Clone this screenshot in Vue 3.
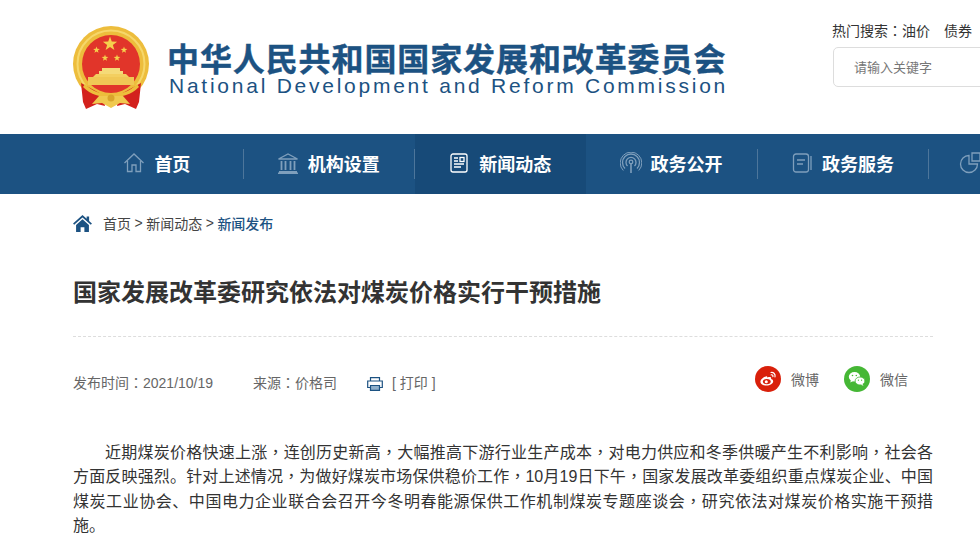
<template>
  <div class="page">
    <header class="top">
      <svg class="emblem" viewBox="0 0 80 84" width="80" height="84">
        <circle cx="39" cy="38" r="38" fill="#edbd3c" />
        <circle cx="39" cy="38" r="33.500" fill="none" stroke="#f6d76a" stroke-width="2" />
        <circle cx="39" cy="38" r="29" fill="#e1352a" />
        <polygon v-for="(s, i) in stars" :key="i" :points="starPoints(s)" fill="#f5d04c" />
        <path d="M24 48h30l3 3H21z" fill="#f3cf60" />
        <path d="M27 45h24v3H27zM30 42h18v3H30z" fill="#f5da78" />
        <path d="M16 51h46v8H16z" fill="#f0c755" />
        <path d="M9 57 31 69l2 11-8-2-11 5-3-7z" fill="#d3211d" />
        <path d="M69 57 47 69l-2 11 8-2 11 5 3-7z" fill="#d3211d" />
        <path d="M13 58c8 8 16 10 26 10s18-2 26-10l2 3c-8 8-17 10-28 10S19 69 11 61z" fill="#edbd3c" />
        <path d="M27 70h24l7 8-10-1-9 5-9-5-10 1z" fill="#f0c94f" />
        <circle cx="39" cy="72" r="3.500" fill="#d9a52c" />
      </svg>
      <div class="brand">
        <h1 class="cn-name">中华人民共和国国家发展和改革委员会</h1>
        <p class="en-name">National Development and Reform Commission</p>
      </div>
      <div class="search-side">
        <div class="hot">
          <span><template v-for="(seg, i) in punct('热门搜索：油价')" :key="i"><span :class="{ mark: seg.mark }">{{ seg.text }}</span></template></span>
          <span>债券</span>
        </div>
        <input class="search" type="text" placeholder="请输入关键字" />
      </div>
    </header>

    <nav class="nav">
      <a v-for="item in navItems" :key="item.label" class="nav-item" :class="{ active: item.active }">
        <svg class="nav-icon" viewBox="0 0 22 22" width="22" height="22" fill="none" stroke="currentColor" stroke-width="1.300" v-html="item.icon"></svg>
        <span class="nav-label">{{ item.label }}</span>
      </a>
    </nav>

    <main class="content">
      <div class="crumbs">
        <svg viewBox="0 0 20 18" width="19" height="17">
          <path d="M10 0 0 9l1.200 1.400L10 2.600l8.800 7.800L20 9l-3-2.700V1.500h-2.600v2.500z" fill="#1c5282" />
          <path d="M3.200 10.600 10 4.600l6.800 6V18H12v-5H8v5H3.200z" fill="#1c5282" />
        </svg>
        <span>首页</span><i>&gt;</i><span>新闻动态</span><i>&gt;</i><b>新闻发布</b>
      </div>

      <h2 class="title">国家发展改革委研究依法对煤炭价格实行干预措施</h2>

      <div class="meta">
        <span class="date"><template v-for="(seg, i) in punct('发布时间：2021/10/19')" :key="i"><span :class="{ mark: seg.mark }">{{ seg.text }}</span></template></span>
        <span class="source"><template v-for="(seg, i) in punct('来源：价格司')" :key="i"><span :class="{ mark: seg.mark }">{{ seg.text }}</span></template></span>
        <svg class="printer" viewBox="0 0 16 14" width="16" height="14" fill="none" stroke="#1c5282" stroke-width="1.200">
          <path d="M3.500 4V.7h9V4" />
          <path d="M3.500 10.500H.7V4h14.600v6.500h-2.800" />
          <path d="M3.500 8.500h9v4.800h-9z" fill="#8fb0cc" />
        </svg>
        <span class="print">[ 打印 ]</span>
        <div class="share">
          <span class="share-item">
            <svg viewBox="0 0 26 26" width="26" height="26">
              <circle cx="13" cy="13" r="13" fill="#d9200b" />
              <path d="M11 10.500c-3 .6-5.600 3-5.600 5.300 0 2.300 2.800 3.800 6 3.800 3.700 0 6.800-2 6.800-4.300 0-1.500-1.500-2-2.200-2.200.5-1.300 0-2.400-2.100-2.100-1 .2-1.600.6-1.700.5.200-1-.1-1.500-1.200-1z" fill="#fff" />
              <ellipse cx="11.800" cy="15.600" rx="3.900" ry="2.700" fill="#d9200b" />
              <circle cx="11.300" cy="15.700" r="1.500" fill="#fff" />
              <path d="M16 6.500c2.600-.4 4.600 1.600 4 4.300M16.200 8.800c1.200-.2 2 .7 1.700 1.900" fill="none" stroke="#fff" stroke-width="1.200" stroke-linecap="round" />
            </svg>
            微博
          </span>
          <span class="share-item">
            <svg viewBox="0 0 26 26" width="26" height="26">
              <circle cx="13" cy="13" r="13" fill="#45b735" />
              <ellipse cx="10.500" cy="10.800" rx="5.700" ry="4.800" fill="#fff" />
              <path d="m7 14-.8 2.500 3-1.500z" fill="#fff" />
              <ellipse cx="16" cy="15" rx="4.900" ry="4" fill="#fff" stroke="#45b735" stroke-width=".8" />
              <path d="m18.500 18 1 1.800-2.800-1z" fill="#fff" />
              <circle cx="8.500" cy="9.500" r=".8" fill="#45b735" />
              <circle cx="12.300" cy="9.500" r=".8" fill="#45b735" />
              <circle cx="14.400" cy="14.200" r=".6" fill="#45b735" />
              <circle cx="17.600" cy="14.200" r=".6" fill="#45b735" />
            </svg>
            微信
          </span>
        </div>
      </div>

      <p class="body-text"><template v-for="(seg, i) in bodyParts.flatMap(punct)" :key="i"><span :class="{ mark: seg.mark }">{{ seg.text }}</span></template></p>
    </main>
  </div>
</template>

<script setup>
// cut where the lines wrap, so no span runs over two lines
const bodyParts = [
  '近期煤炭价格快速上涨，连创历史新高，大幅推高下游行业生产成本，对电力供应和冬季供暖产生不利影响，社会各',
  '方面反映强烈。针对上述情况，为做好煤炭市场保供稳价工作，10月19日下午，国家发展改革委组织重点煤炭企业、中国',
  '煤炭工业协会、中国电力企业联合会召开今冬明春能源保供工作机制煤炭专题座谈会，研究依法对煤炭价格实施干预措',
  '施。'
]

// commas and colons sit centred in the box in the original font
function punct(text) {
  return text.split(/([，：])/).map((s) => ({ text: s, mark: s === '，' || s === '：' }))
}

const stars = [
  { x: 38, y: 18, r: 7.500 },
  { x: 24.500, y: 24, r: 3.500 },
  { x: 52, y: 24, r: 3.500 },
  { x: 33, y: 32, r: 3.500 },
  { x: 45, y: 32, r: 3.500 }
]

function starPoints({ x, y, r }) {
  const pts = []
  for (let i = 0; i < 10; i++) {
    const rad = i % 2 ? r * 0.4 : r
    const a = -Math.PI / 2 + (i * Math.PI) / 5
    pts.push((x + rad * Math.cos(a)).toFixed(2) + ',' + (y + rad * Math.sin(a)).toFixed(2))
  }
  return pts.join(' ')
}

const navItems = [
  { label: '首页', icon: '<path d="M1.500 11 11 2l9.500 9"/><path d="M4.500 9v10.500h4.500V13h4v6.500h4.500V9"/>' },
  { label: '机构设置', icon: '<path d="M1.500 7 11 2l9.500 5z"/><path d="M2 20h18M1 21.300h20M4.500 9v9M8.500 9v9M13.500 9v9M17.500 9v9" stroke-width="1.800"/>' },
  { label: '新闻动态', active: true, icon: '<rect x="3" y="2" width="16" height="18" rx="2"/><path d="M6 6h4M6 9h4M6 12h10M6 15h7"/><rect x="12" y="5.500" width="4" height="4"/>' },
  { label: '政务公开', icon: '<path d="M11 11v10" stroke-width="1.600"/><circle cx="11" cy="10" r="1.800"/><path d="M7.500 14a5 5 0 1 1 7 0M5 16.500a8.500 8.500 0 1 1 12 0"/><path d="M3.300 18.500a10.800 10.800 0 1 1 15.400 0" stroke-width="1"/>' },
  { label: '政务服务', icon: '<rect x="2.500" y="2" width="15" height="18" rx="2.500"/><path d="M6 8h8M6 12h6M20 4v14"/>' },
  { label: '', icon: '<path d="M10 3.500a8.500 8.500 0 1 0 8.500 8.500H10z"/><path d="M13 1h8v8h-8z"/>' }
]
</script>

<style scoped>
.page {
  width: 1040px;
  font-family: "Liberation Sans", "Noto Sans CJK SC", sans-serif;
  color: #333;
}

.mark {
  display: inline-block;
  width: 1em;
  font-family: "Noto Sans CJK TC", sans-serif;
  line-height: 0;
  text-indent: 0;
  text-align: center;
}

.top {
  height: 134px;
  display: flex;
  padding-left: 72px;
  box-sizing: border-box;
}

.emblem {
  margin-top: 26px;
  flex: none;
}

.brand {
  margin-left: 15px;
  padding-top: 45px;
  width: 566px;
  flex: none;
}

.cn-name {
  margin: 0;
  font-size: 32px;
  line-height: 30px;
  font-weight: 700;
  letter-spacing: 0.9px;
  color: #1c5282;
  white-space: nowrap;
  -webkit-text-stroke: 0.4px #1c5282;
}

.en-name {
  margin: 0 0 0 2px;
  font-size: 21px;
  line-height: 22px;
  letter-spacing: 2.750px;
  color: #1c5282;
  white-space: nowrap;
}

.search-side {
  margin-left: 100px;
  padding-top: 22px;
  flex: none;
}

.hot {
  display: flex;
  gap: 14px;
  margin-left: -1px;
  font-size: 14px;
  line-height: 18px;
  color: #333;
}

.search {
  display: block;
  width: 200px;
  height: 40px;
  margin-top: 7px;
  padding: 0 20px 2px;
  box-sizing: border-box;
  border: 1px solid #ddd;
  border-radius: 5px;
  font: 13px "Noto Sans CJK SC", sans-serif;
  outline: none;
}

.search::placeholder {
  color: #777;
}

.nav {
  height: 60px;
  display: flex;
  padding-left: 72.200px;
  background: #1c5282;
}

.nav-item {
  position: relative;
  width: 171.400px;
  flex: none;
  display: flex;
  align-items: center;
  justify-content: center;
  gap: 9px;
  padding-right: 2px;
  padding-bottom: 3px;
  box-sizing: border-box;
  color: #fff;
  font-size: 18px;
  font-weight: 700;
}

.nav-label:empty {
  width: 78px;
}

.nav-item::after {
  content: "";
  position: absolute;
  right: 0;
  top: 15px;
  height: 30px;
  width: 1px;
  background: #4d769b;
}

.nav-item.active {
  background: #174a78;
}

.nav-item.active::after {
  display: none;
}

.nav-icon {
  color: #7f9fbc;
  flex: none;
}

.nav-item.active .nav-icon {
  color: #fff;
}

.content {
  padding: 0 107px 0 73px;
}

.crumbs {
  height: 58px;
  padding-bottom: 2px;
  display: flex;
  align-items: center;
  font-size: 14px;
  color: #444;
}

.crumbs svg {
  margin-right: 11px;
}

.crumbs i {
  font-style: normal;
  margin: 0 3.500px;
}

.crumbs b {
  font-weight: 500;
  color: #1c5282;
}

.title {
  margin: 0;
  padding: 21px 0 25px;
  border-bottom: 1px dashed #ddd;
  font-size: 24px;
  line-height: 36px;
  font-weight: 700;
  color: #333;
}

.meta {
  height: 90px;
  display: flex;
  align-items: center;
  font-size: 14px;
  color: #666;
}

.date {
  width: 180px;
}

.source {
  width: 114px;
}

.printer {
  margin-right: 9px;
  margin-top: 3px;
}

.share {
  margin-left: auto;
  display: flex;
  gap: 25px;
  margin-right: 25px;
  margin-top: -6px;
}

.share-item {
  display: flex;
  align-items: center;
  gap: 10px;
}

.body-text {
  margin: 14px 0 0;
  font-size: 16px;
  line-height: 24.300px;
  text-indent: 2em;
  text-align: justify;
  color: #333;
}
</style>

<style>
html, body {
  overflow: hidden;
  background: #fff;
}
</style>
